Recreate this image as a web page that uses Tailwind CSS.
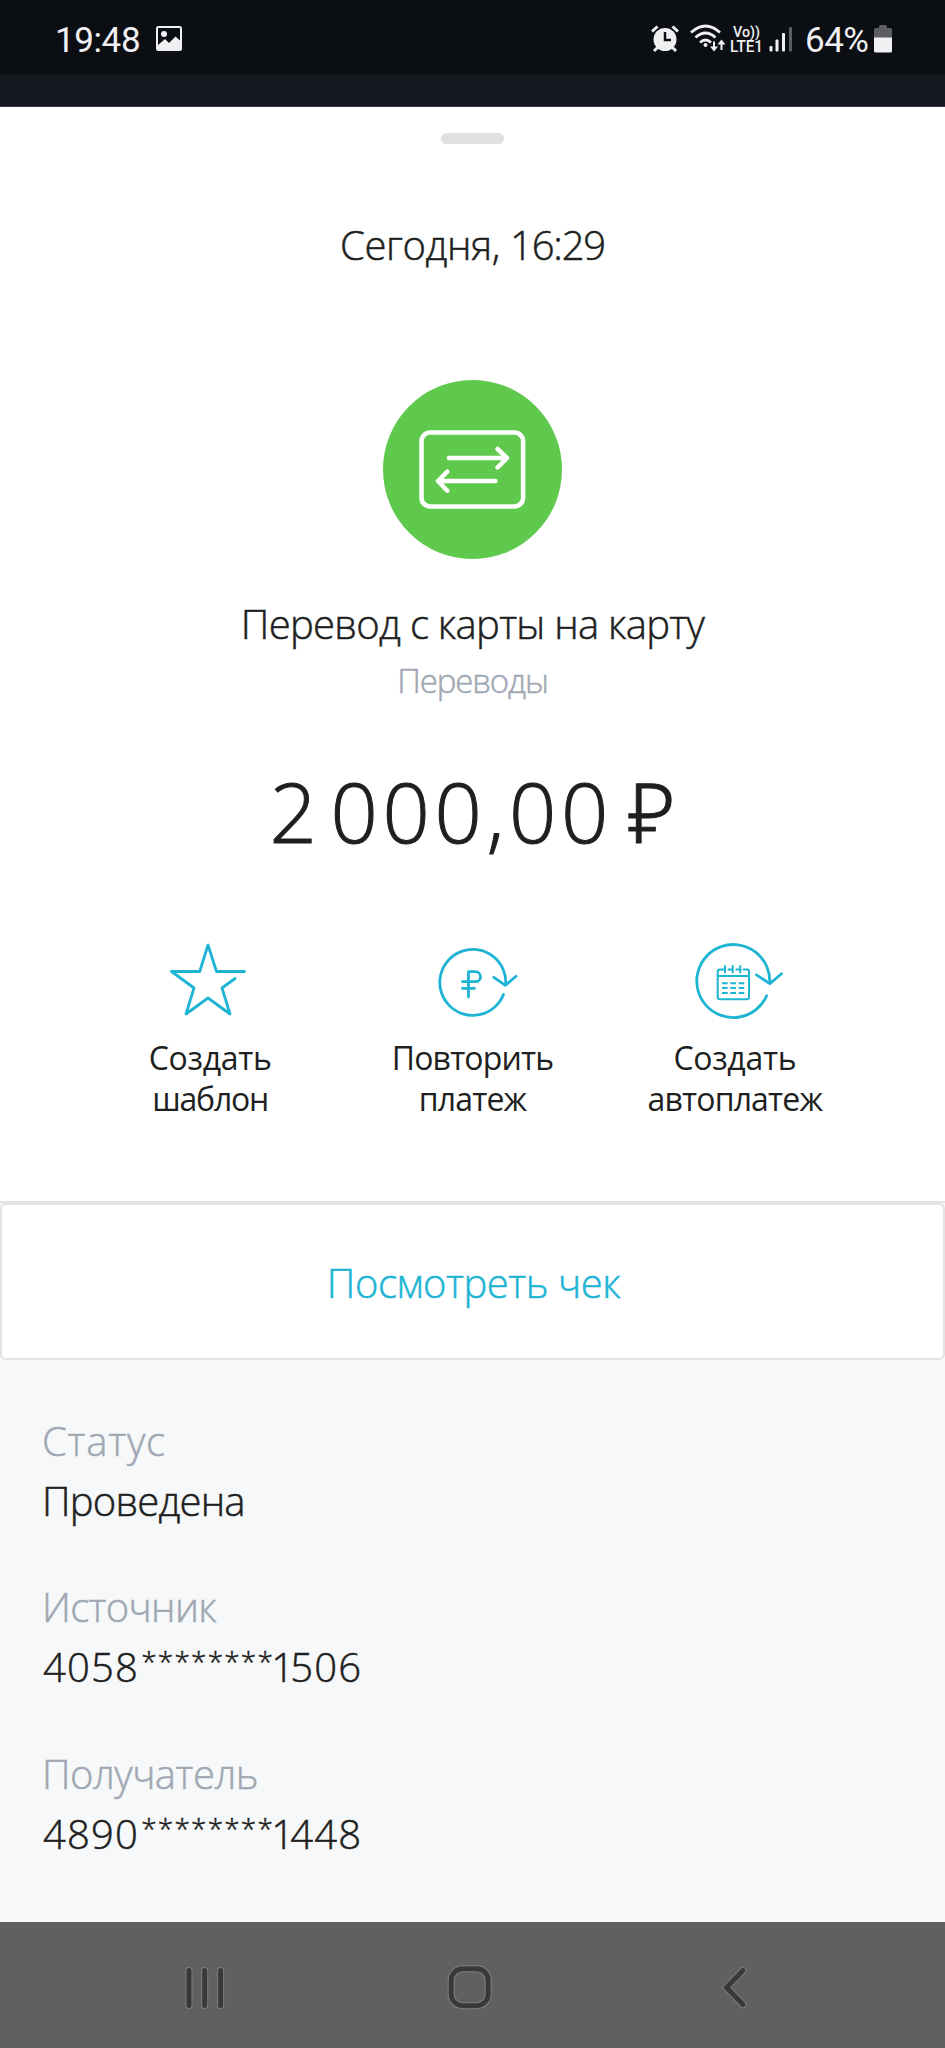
<!DOCTYPE html>
<html lang="ru">
<head>
  <meta charset="UTF-8">
  <title>Перевод с карты на карту</title>
  <script src="https://cdn.jsdelivr.net/npm/@tailwindcss/browser@4"></script>
</head>
<body class="w-[945px] h-[2048px] overflow-hidden bg-white font-['Open_Sans','Noto_Sans',sans-serif] font-[350] text-[#1e1f21] flex flex-col">

  <!-- status bar -->
  <header class="h-[75px] shrink-0 bg-[#0b0e13] text-[#f0f0f2] font-['Roboto',sans-serif] font-normal flex items-start pl-[55px] pr-[53px]">
    <span class="mt-[21px] text-[35px] leading-10 w-[101px] whitespace-nowrap tracking-[-0.4px]">19:48</span>
    <svg class="mt-[26px] w-[26px] h-[25px]" viewBox="0 0 26 25">
      <path fill="#f0f0f2" fill-rule="evenodd" d="M2.5 0h21A2.5 2.5 0 0 1 26 2.500v20a2.500 2.500 0 0 1-2.500 2.500h-21A2.500 2.500 0 0 1 0 22.500v-20A2.500 2.500 0 0 1 2.500 0zM2 2v17l7-6 4 4 6.500-6.500 4.500 4V2z"/>
      <circle cx="8" cy="8" r="3" fill="#f0f0f2"/>
    </svg>
    <div class="ml-auto flex items-start">
      <svg class="mt-[25px] w-7 h-7" viewBox="0 0 28 28">
        <g stroke="#f0f0f2" stroke-width="3" fill="none">
          <path d="M1 6.500 6.500 1.500M27 6.500l-5.500-5M7 22l-4 4M21 22l4 4"/>
        </g>
        <circle cx="14" cy="14.500" r="11.500" fill="#f0f0f2"/>
        <path d="M14 7v8h6" stroke="#0b0e13" stroke-width="2.500" fill="none"/>
      </svg>
      <svg class="mt-[24px] ml-[11px] w-9 h-7" viewBox="0 0 36 28" fill="none" stroke="#f0f0f2">
        <path stroke-width="2.800" d="M1 8.500Q15.500-4.500 30 8.500M5.500 13.500q10-9 20 0M10 18.500q5.500-5 11 0"/>
        <circle cx="15.500" cy="21" r="2" fill="#f0f0f2" stroke="none"/>
        <path stroke-width="2" d="M24 17.500v7.500M31.500 26v-7.500"/>
        <path fill="#f0f0f2" stroke="none" d="M20 22.500h8L24 27.500zM27.500 20.500h8l-4-5z"/>
      </svg>
      <svg class="mt-[24px] ml-1 w-[34px] h-[30px] overflow-visible" viewBox="0 0 34 30" fill="#f0f0f2" font-family="Roboto" font-weight="500">
        <text x="3" y="12.500" font-size="15" textLength="27" lengthAdjust="spacingAndGlyphs">Vo))</text>
        <text x="0" y="28" font-size="17" textLength="33" lengthAdjust="spacingAndGlyphs">LTE1</text>
      </svg>
      <svg class="mt-[26px] ml-[5px] w-6 h-[26px]" viewBox="0 0 24 26" fill="#f0f0f2">
        <rect x="0.500" y="20" width="3" height="5.500" rx="1"/>
        <rect x="6.500" y="13.500" width="3" height="12" rx="1"/>
        <rect x="13" y="7" width="3" height="18.500" rx="1"/>
        <rect x="20" y="1" width="3" height="24.500" rx="1" fill="#5c5e62"/>
      </svg>
      <span class="mt-[21px] ml-3 w-[68px] text-[35px] leading-10 whitespace-nowrap tracking-[-0.5px]">64%</span>
      <svg class="mt-[25px] ml-px w-[18px] h-[28px]" viewBox="0 0 18 28">
        <path fill="#5c5e62" d="M5 1.500Q5 0 6.500 0h5Q13 0 13 1.500V3h3.500Q18 3 18 4.500V13H0V4.500Q0 3 1.500 3H5z"/>
        <path fill="#f0f0f2" d="M0 12.500h18V26q0 1.500-1.500 1.500h-15Q0 27.500 0 26z"/>
      </svg>
    </div>
  </header>
  <div class="h-8 shrink-0 bg-[#141920] border-b border-[#3b3f45]"></div>

  <!-- operation sheet -->
  <main class="h-[1094px] shrink-0 flex flex-col items-center">
    <div class="mt-[26px] w-[63px] h-[11px] rounded-full bg-[#e0e0e0]"></div>
    <p class="mt-[71px] h-[60px] text-[40px] leading-[60px] whitespace-nowrap tracking-[-0.4px] [-webkit-text-stroke:0.5px]">Сегодня, <span class="tracking-[-1.2px]">16:29</span></p>

    <div class="mt-[105px] w-[179px] h-[179px] rounded-full bg-[#5ec94c]">
      <svg class="w-[179px] h-[179px]" viewBox="0 0 179 179" fill="none" stroke="#fff" stroke-width="4.500" stroke-linecap="round" stroke-linejoin="round">
        <rect x="38.500" y="52.600" width="101.600" height="73.800" rx="8.500"/>
        <path d="M66 78h58M114.500 69l9.500 9-9.500 9.500M112.500 101H55M64.300 91.700 55 101l9.300 9.700"/>
      </svg>
    </div>

    <h1 class="mt-[35px] h-[60px] text-[40px] leading-[60px] whitespace-nowrap tracking-[-0.7px] [-webkit-text-stroke:0.5px]">Перевод с карты на карту</h1>
    <p class="mt-[2px] h-[50px] text-[33px] leading-[50px] text-[#a0a8b3] whitespace-nowrap tracking-[-1.1px] [-webkit-text-stroke:0.5px]">Переводы</p>
    <p class="mt-[55px] h-[100px] text-[83px] leading-[100px] whitespace-nowrap tracking-[4.6px] [word-spacing:-17px] [-webkit-text-stroke:1px]">2 000,00 <span class="ml-1.5 tracking-normal">₽</span></p>

    <div class="mt-[79px] w-[787px] grid grid-cols-3 text-[32px] leading-[41px] font-normal text-center tracking-[-0.85px]">
      <div class="flex flex-col items-center">
        <svg class="w-[90px] h-20 overflow-visible" viewBox="0 0 90 80" fill="none" stroke="#1eb4d4" stroke-width="2.800" stroke-linecap="round" stroke-linejoin="round">
          <path d="M79.500 31.500h-28L43 5l-8.300 26.500H6.500L29 48l-8 26 22-16 22 16-8-26 13-9.500"/>
        </svg>
        <p class="mt-[17px]"><span class="tracking-[-0.3px]">Создать</span><br><span class="tracking-[-1.2px]">шаблон</span></p>
      </div>
      <div class="flex flex-col items-center">
        <svg class="w-[90px] h-20 overflow-visible" viewBox="0 0 90 80" fill="none" stroke="#1eb4d4" stroke-width="2.800" stroke-linecap="round" stroke-linejoin="round">
          <path d="M78.700 45A33 33 0 1 0 76.500 54.500M66.800 37.300l11.700 8 10.500-9"/>
          <path d="M41.500 57V31.700h7a5 5 0 0 1 0 10H35.500M35.500 48.300h12"/>
        </svg>
        <p class="mt-[17px]">Повторить<br>платеж</p>
      </div>
      <div class="flex flex-col items-center">
        <svg class="w-[90px] h-20 overflow-visible" viewBox="0 0 90 80" fill="none" stroke="#1eb4d4" stroke-width="2.800" stroke-linecap="round" stroke-linejoin="round">
          <path d="M79.700 43.500A36.500 36.500 0 1 0 76.700 55.700M66.500 34.900l13.300 8.800 11.700-10"/>
          <g stroke-width="2">
            <path d="M35 29.500h-5q-2.300 0-2.300 2.300V57q0 2.300 2.300 2.300h26.700Q59 59.300 59 57V31.800q0-2.300-2.300-2.300H53.500M38.500 29.500h4M46.500 29.500h4M27.700 36H59M35 26v6.500M42.700 26v6.500M50.300 26v6.500"/>
            <path stroke-linecap="butt" d="M32 43.300h5.700M40.300 43.300H46M48.700 43.300h5.600M32 48h5.700M40.300 48H46M48.700 48h5.600M32 53h5.700M40.300 53H46M48.700 53h5.600"/>
          </g>
        </svg>
        <p class="mt-[17px]"><span class="tracking-[-0.3px]">Создать</span><br>автоплатеж</p>
      </div>
    </div>
  </main>

  <!-- receipt button -->
  <div class="h-[159px] shrink-0 bg-[#f7f8fa] border-t-2 border-[#e3e3e3]">
    <button class="block w-full h-[157px] pt-0.5 pl-0.5 bg-white border-2 border-[#e3e3e3] rounded-md text-[40px] leading-[60px] text-[#1eb4d4] tracking-[-0.45px] [-webkit-text-stroke:0.5px]">Посмотреть чек</button>
  </div>

  <!-- details -->
  <dl class="h-[562px] shrink-0 bg-[#f7f8fa] pl-[42px] pt-[51px] text-[40px] leading-[60px] whitespace-nowrap [-webkit-text-stroke:0.5px]">
    <dt class="text-[#a0a8b3] tracking-[0.8px]">Статус</dt>
    <dd class="h-[60px] tracking-[-0.8px]">Проведена</dd>
    <dt class="mt-[46px] text-[#a0a8b3] tracking-[-0.65px]">Источник</dt>
    <dd class="h-[60px] pl-px tracking-[1.2px]">4058<span class="ml-0.5 text-[28px] leading-none align-[10px]">********</span><span class="-ml-[3px] -mr-[5px]">1</span>506</dd>
    <dt class="mt-[47px] text-[#a0a8b3] tracking-[-0.5px]">Получатель</dt>
    <dd class="h-[60px] pl-px tracking-[1.2px]">4890<span class="ml-0.5 text-[28px] leading-none align-[10px]">********</span><span class="-ml-[3px] -mr-[5px]">1</span>448</dd>
  </dl>

  <!-- navigation bar -->
  <nav class="h-[126px] shrink-0 bg-[#606060] flex items-start">
    <svg class="mt-[43px] ml-[184px] w-[42px] h-[46px]" viewBox="0 0 42 46" fill="none" stroke-linecap="round">
      <path stroke="#7c7c7c" stroke-width="7" d="M5 5.500v35M20.700 5.500v35M36.600 5.500v35"/>
      <path stroke="#393939" stroke-width="5" d="M5 5.500v35M20.700 5.500v35M36.600 5.500v35"/>
    </svg>
    <svg class="mt-[42px] ml-[221px] w-[46px] h-[46px]" viewBox="0 0 46 46" fill="none">
      <rect x="4.200" y="4.700" width="37" height="37" rx="11.500" stroke="#808080" stroke-width="7"/>
      <rect x="4.200" y="4.700" width="37" height="37" rx="11.500" stroke="#393939" stroke-width="5"/>
    </svg>
    <svg class="mt-[42px] ml-[226px] w-[32px] h-[46px]" viewBox="0 0 32 46" fill="none" stroke-linecap="round">
      <path stroke="#7c7c7c" stroke-width="7" d="M24 6.500 7.500 23.500l16.500 17"/>
      <path stroke="#393939" stroke-width="5" d="M24 6.500 7.500 23.500l16.500 17"/>
    </svg>
  </nav>
</body>
</html>
